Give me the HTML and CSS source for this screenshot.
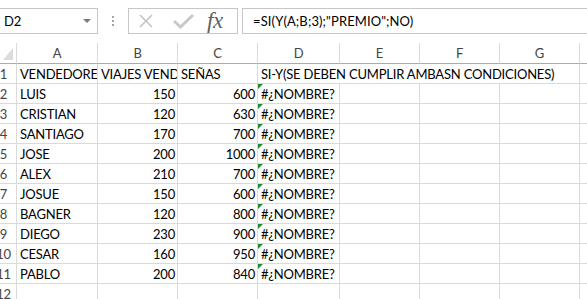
FILE: index.html
```html
<!DOCTYPE html>
<html lang="es">
<head>
    <meta charset="UTF-8">
    <title>Hoja de cálculo</title>
    <link rel="stylesheet" href="styles.css">
</head>
<body>
    <div class="formula-bar">
        <div class="name-box">
            <span>D2</span>
            <span class="caret"></span>
        </div>
        <div class="grip"><i></i><i></i><i></i></div>
        <div class="tools">
            <svg class="icon-x" width="16" height="16" viewBox="0 0 16 16">
                <path d="M2 2 L14 14 M14 2 L2 14" stroke="#c4c4c4" stroke-width="1.6" fill="none"/>
            </svg>
            <svg class="icon-check" width="22" height="16" viewBox="0 0 22 16">
                <path d="M1 8 L7.5 14 L20 2" stroke="#c8c8c8" stroke-width="3" fill="none"/>
            </svg>
            <span class="fx">fx</span>
        </div>
        <div class="formula">=SI(Y(A;B;3);"PREMIO";NO)</div>
    </div>

    <div class="sheet">
        <!-- column headers -->
        <div class="corner"><span class="select-all"></span></div>
        <div class="col-head">A</div>
        <div class="col-head">B</div>
        <div class="col-head">C</div>
        <div class="col-head">D</div>
        <div class="col-head">E</div>
        <div class="col-head">F</div>
        <div class="col-head">G</div>
        <div class="col-head rest"></div>

        <!-- row 1 -->
        <div class="row-head"><span>1</span></div>
        <div class="cell">VENDEDORES</div>
        <div class="cell">VIAJES VENDIDOS</div>
        <div class="cell">SEÑAS</div>
        <div class="cell wide">SI-Y(SE DEBEN CUMPLIR AMBASN CONDICIONES)</div>
        <div class="cell rest"></div>
    </div>

    <script>
        const rows = [
            ['LUIS', 150, 600],
            ['CRISTIAN', 120, 630],
            ['SANTIAGO', 170, 700],
            ['JOSE', 200, 1000],
            ['ALEX', 210, 700],
            ['JOSUE', 150, 600],
            ['BAGNER', 120, 800],
            ['DIEGO', 230, 900],
            ['CESAR', 160, 950],
            ['PABLO', 200, 840]
        ];

        const sheet = document.querySelector('.sheet');

        function addCell(cls, text) {
            const div = document.createElement('div');
            div.className = cls;
            div.textContent = text;
            sheet.appendChild(div);
            return div;
        }

        rows.forEach(function(r, i) {
            const head = addCell('row-head', '');
            head.innerHTML = '<span>' + (i + 2) + '</span>';
            addCell('cell', r[0]);
            addCell('cell num', r[1]);
            addCell('cell num', r[2]);
            addCell('cell error', '#¿NOMBRE?');
            addCell('cell', '');
            addCell('cell', '');
            addCell('cell', '');
            addCell('cell rest', '');
        });

        // row 12, cut by the window
        const last = addCell('row-head', '');
        last.innerHTML = '<span>12</span>';
        for (let c = 0; c < 7; c++) addCell('cell', '');
        addCell('cell rest', '');
    </script>
</body>
</html>
```

FILE: styles.css
```css
html, body {
    margin: 0;
    padding: 0;
    background: #fff;
    overflow: hidden;
    font-family: Lato, "Liberation Sans", sans-serif;
    color: #000;
}

.formula-bar {
    display: flex;
    align-items: center;
    padding-top: 8px;
    height: 26px;
}

.name-box {
    box-sizing: border-box;
    width: 98px;
    height: 26px;
    border: 1px solid #c6c6c6;
    border-left: none;
    display: flex;
    align-items: center;
    justify-content: space-between;
    padding: 0 6px 0 4px;
    font-size: 13px;
    letter-spacing: -0.2px;
}

.caret {
    width: 0;
    height: 0;
    border-left: 4px solid transparent;
    border-right: 4px solid transparent;
    border-top: 4px solid #7a7a7a;
}

.grip {
    width: 30px;
    display: flex;
    flex-direction: column;
    align-items: center;
    gap: 2px;
}

.grip i {
    display: block;
    width: 2px;
    height: 2px;
    background: #a6a6a6;
}

.tools {
    box-sizing: border-box;
    width: 110px;
    height: 26px;
    border: 1px solid #c6c6c6;
    display: flex;
    align-items: center;
    padding-left: 9px;
}

.icon-x {
    margin-right: 19px;
}

.icon-check {
    margin-right: 12px;
}

.fx {
    font-family: "Liberation Serif", serif;
    font-style: italic;
    font-size: 23px;
    color: #5f5f5f;
    letter-spacing: -0.5px;
    line-height: 26px;
}

.formula {
    box-sizing: border-box;
    flex: 1;
    height: 26px;
    margin-left: 4px;
    border: 1px solid #c6c6c6;
    border-right: none;
    padding-left: 10px;
    line-height: 24px;
    font-size: 13px;
    letter-spacing: 0.1px;
    white-space: nowrap;
}

.sheet {
    margin-top: 9px;
    display: grid;
    grid-template-columns: 17px 81px 80px 80px 82px 80px 80px 80px 1fr;
    grid-template-rows: 21px;
    grid-auto-rows: 20px;
    font-size: 13px;
    letter-spacing: -0.2px;
}

.sheet > div {
    box-sizing: border-box;
    border-right: 1px solid #dadada;
    border-bottom: 1px solid #dadada;
    overflow: hidden;
    white-space: nowrap;
}

.corner {
    position: relative;
    border-bottom-color: #ababab !important;
}

.select-all {
    position: absolute;
    left: 3px;
    bottom: 3px;
    width: 0;
    height: 0;
    border-left: 10px solid transparent;
    border-bottom: 12px solid #dcdcdc;
}

.col-head {
    text-align: center;
    color: #444;
    line-height: 20px;
    border-bottom-color: #ababab !important;
}

.rest {
    border-right: none !important;
}

.row-head {
    display: flex;
    justify-content: center;
    padding-right: 9px;
    color: #444;
    line-height: 21px;
    overflow: visible !important;
}

.cell {
    padding: 0 3px;
    line-height: 21px;
    position: relative;
}

.cell.wide {
    grid-column: span 4;
}

.cell.num {
    text-align: right;
    padding-right: 2px;
}

.cell.error::before {
    content: "";
    position: absolute;
    left: 0;
    top: 0;
    width: 0;
    height: 0;
    border-top: 5px solid #1e8a32;
    border-right: 5px solid transparent;
}
```
